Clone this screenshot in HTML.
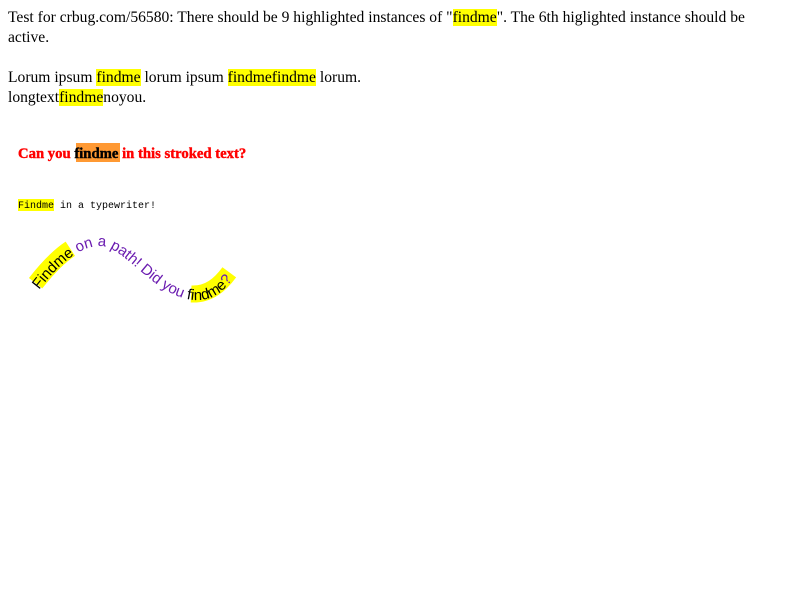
<!DOCTYPE html>
<html><head><style>
body{margin:8px;width:770px;font:15.6px "Liberation Serif",serif;line-height:20px;color:#000;background:#fff}
p{margin:0}
.h{background:#ff0}
svg{position:absolute;left:0;top:0}
</style></head><body>
<p>Test for crbug.com/56580: There should be 9 highlighted instances of "<span class="h">findme</span>". The 6th higlighted instance should be active.</p>
<p style="margin-top:20px">Lorum ipsum <span class="h">findme</span> lorum ipsum <span class="h">findmefindme</span> lorum.<br>longtext<span class="h">findme</span>noyou.</p>
<svg width="800" height="600">
<rect x="76" y="143" width="44" height="19" fill="#ff9933"/>
<text x="18" y="158" font-family="Liberation Serif" font-weight="bold" font-size="14.7" fill="#f00" stroke="#f00" stroke-width="0.4">Can you <tspan fill="#000" stroke="#000">findme</tspan> in this stroked text?</text>
<rect x="18" y="199" width="36" height="12" fill="#ff0"/>
<text x="18" y="208" font-family="Liberation Mono" font-size="10" fill="#000">Findme in a typewriter!</text>
<g transform="translate(5,-2)">
<path d="M 34,292 C 55,265 75,248 95,248 C 120,248 150,300 190,302 C 210,303 222,290 232,275" fill="none" stroke="#ff0" stroke-width="17" stroke-dasharray="0 1 49 139 46 300" transform="translate(-4,-6)"/>
<path id="pp" d="M 34,292 C 55,265 75,248 95,248 C 120,248 150,300 190,302 C 210,303 222,290 232,275" fill="none"/>
<text font-family="Liberation Sans" font-size="15" fill="#6a1bb0"><textPath href="#pp"><tspan fill="#000">Findme</tspan> on a path! Did you <tspan fill="#000">findme</tspan>?</textPath></text>
</g>
</svg>
</body></html>
